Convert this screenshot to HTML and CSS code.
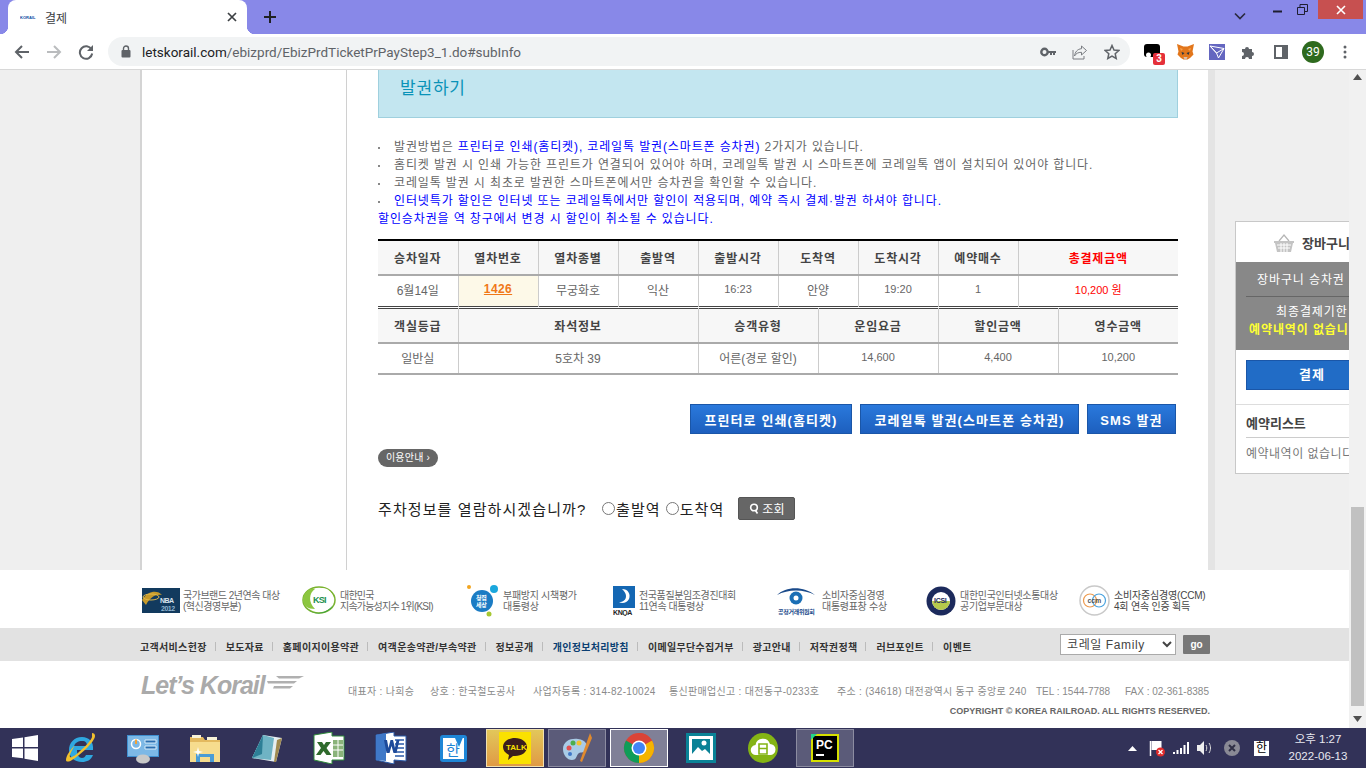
FILE: index.html

```html
<!DOCTYPE html>
<html lang="ko">
  <head>
    <meta charset="utf-8">
    <title>결제</title>
    <link rel="stylesheet" href="styles.css">
  </head>
  <body>
    <div class="tabstrip">
      <div class="tab">
        <span class="tab-favicon">KORAIL</span>
        <span class="tab-title">결제</span>
        <svg class="tab-close" width="10" height="10" viewBox="0 0 10 10"><path d="M1 1l8 8M9 1l-8 8" stroke="#3c4043" stroke-width="1.7"/></svg>
      </div>
      <svg class="tab-new" width="14" height="14" viewBox="0 0 14 14"><path d="M7 1v12M1 7h12" stroke="#202124" stroke-width="2"/></svg>
      <div class="win-buttons">
        <svg class="win-chevron" width="12" height="8" viewBox="0 0 12 8"><path d="M1 1.5l5 5 5-5" fill="none" stroke="#2b2b40" stroke-width="1.7"/></svg>
        <svg class="win-min" width="9" height="3" viewBox="0 0 9 3"><path d="M0 1.5h9" stroke="#1e1e30" stroke-width="2"/></svg>
        <svg class="win-restore" width="11" height="11" viewBox="0 0 11 11"><path d="M.5 3.5h7v7h-7zM3 3.5V.5h7.500v7H7.500" fill="none" stroke="#1e1e30"/></svg>
        <div class="win-close"><svg width="10" height="10" viewBox="0 0 10 10"><path d="M1 1l8 8M9 1l-8 8" stroke="#fff" stroke-width="1.600"/></svg></div>
      </div>
    </div>

    <div class="toolbar">
      <svg class="nav-icon" width="16" height="16" viewBox="0 0 16 16"><path d="M15 8H2M8 2L2 8l6 6" fill="none" stroke="#5f6368" stroke-width="2"/></svg>
      <svg class="nav-icon" width="16" height="16" viewBox="0 0 16 16"><path d="M1 8h13M8 2l6 6-6 6" fill="none" stroke="#babcbe" stroke-width="2"/></svg>
      <svg class="nav-icon" width="16" height="16" viewBox="0 0 16 16"><path d="M13.500 5.500A6.200 6.200 0 1 0 14.200 9.500" fill="none" stroke="#5f6368" stroke-width="2"/><path d="M15 1v6H9z" fill="#5f6368"/></svg>
      <div class="omnibox">
        <svg width="10" height="13" viewBox="0 0 10 13"><path d="M2.500 5V3.500a2.500 2.500 0 0 1 5 0V5" fill="none" stroke="#5f6368" stroke-width="1.400"/><rect x="0.500" y="5" width="9" height="7.500" rx="1" fill="#5f6368"/></svg>
        <span class="url"><b>letskorail.com</b>/ebizprd/EbizPrdTicketPrPayStep3_1.do#subInfo</span>
        <svg class="omni-icon" width="16" height="10" viewBox="0 0 16 10"><circle cx="4.500" cy="5" r="3.200" fill="none" stroke="#5f6368" stroke-width="2.400"/><path d="M8 4h8v2h-1v2h-2V6h-1v2h-2V6H8z" fill="#5f6368"/></svg>
        <svg class="omni-icon" width="16" height="16" viewBox="0 0 16 16"><path d="M9.500 2l5 4.500-5 4.500V8.300C6 8.300 4 9.500 2.500 12 3 8 5.500 5 9.500 4.700z" fill="none" stroke="#7a7d82"/><path d="M1 6v9h11v-3" fill="none" stroke="#7a7d82"/></svg>
        <svg class="omni-icon" width="16" height="16" viewBox="0 0 16 16"><path d="M8 1.500l2 4.500 4.800.5-3.600 3.200 1 4.800L8 12l-4.200 2.500 1-4.800L1.200 6.500 6 6z" fill="none" stroke="#5f6368" stroke-width="1.500"/></svg>
      </div>
      <div class="extensions">
        <div class="ext ext-black">
          <svg width="16" height="16" viewBox="0 0 16 16"><path d="M3 0h10a3 3 0 0 1 3 3v10H3a3 3 0 0 1-3-3V3a3 3 0 0 1 3-3z" fill="#000"/><circle cx="4.500" cy="11" r="2.500" fill="#fff"/></svg>
          <span class="ext-badge">3</span>
        </div>
        <svg class="ext" width="17" height="16" viewBox="0 0 17 16"><path d="M0 0l6.500 2.500h4L17 0l-1.500 7.500 1 3-3.500 3.500-2.500 1.500H6.500L4 14 .5 10.500l1-3z" fill="#e2761b"/><path d="M4.500 8l3 1-2 2zM12.500 8l-3 1 2 2z" fill="#233447"/><path d="M6.500 13h4l-1 2.500h-2z" fill="#d7c1b3"/><path d="M3 4l3 1-2 2zM14 4l-3 1 2 2z" fill="#f6a04d"/></svg>
        <svg class="ext" width="16" height="16" viewBox="0 0 16 16"><rect width="16" height="16" fill="#6466c0"/><path d="M1 2l14 2.500L9.500 14 7.500 9zM7.500 9L15 4.500M1 2l6.500 7" fill="none" stroke="#fff"/></svg>
        <svg class="ext" width="16" height="16" viewBox="0 0 16 16"><path d="M2 5h3a2 2 0 0 1 4 0h3v3a2 2 0 0 1 0 4v3H9a2 2 0 0 0-4 0H2v-3a2 2 0 0 0 0-4z" fill="#5f6368"/></svg>
        <svg class="ext" width="14" height="14" viewBox="0 0 14 14"><rect x="1" y="1" width="12" height="12" fill="none" stroke="#5f6368" stroke-width="2"/><rect x="8" y="1" width="5" height="12" fill="#5f6368"/></svg>
        <span class="avatar">39</span>
        <svg class="ext" width="4" height="14" viewBox="0 0 4 14"><circle cx="2" cy="2" r="1.500" fill="#5f6368"/><circle cx="2" cy="7" r="1.500" fill="#5f6368"/><circle cx="2" cy="12" r="1.500" fill="#5f6368"/></svg>
      </div>
    </div>

    <div class="viewport">
      <div class="page">
        <div class="wrap">
          <div class="side"></div>
          <div class="content">
            <h2 class="sec-title">발권하기</h2>
            <ul class="notice">
              <li>발권방법은 <em>프린터로 인쇄(홈티켓), 코레일톡 발권(스마트폰 승차권)</em> 2가지가 있습니다.</li>
              <li>홈티켓 발권 시 인쇄 가능한 프린트가 연결되어 있어야 하며, 코레일톡 발권 시 스마트폰에 코레일톡 앱이 설치되어 있어야 합니다.</li>
              <li>코레일톡 발권 시 최초로 발권한 스마트폰에서만 승차권을 확인할 수 있습니다.</li>
              <li><em>인터넷특가 할인은 인터넷 또는 코레일톡에서만 할인이 적용되며, 예약 즉시 결제·발권 하셔야 합니다.</em></li>
            </ul>
            <p class="notice-last">할인승차권을 역 창구에서 변경 시 할인이 취소될 수 있습니다.</p>

            <table class="tbl tbl-first">
              <tr>
                <th>승차일자</th><th>열차번호</th><th>열차종별</th><th>출발역</th><th>출발시각</th><th>도착역</th><th>도착시각</th><th>예약매수</th><th class="wide red">총결제금액</th>
              </tr>
              <tr>
                <td>6월14일</td><td class="train"><a href="#">1426</a></td><td>무궁화호</td><td>익산</td><td class="num">16:23</td><td>안양</td><td class="num">19:20</td><td class="num">1</td><td class="wide red num">10,200 원</td>
              </tr>
            </table>
            <table class="tbl tbl-second">
              <tr>
                <th class="c-grade">객실등급</th><th class="c-seat">좌석정보</th><th>승객유형</th><th>운임요금</th><th>할인금액</th><th>영수금액</th>
              </tr>
              <tr>
                <td>일반실</td><td>5호차 39</td><td>어른(경로 할인)</td><td class="num">14,600</td><td class="num">4,400</td><td class="num">10,200</td>
              </tr>
            </table>

            <div class="btn-row">
              <button class="btn-blue b1">프린터로 인쇄(홈티켓)</button>
              <button class="btn-blue b2">코레일톡 발권(스마트폰 승차권)</button>
              <button class="btn-blue b3">SMS 발권</button>
            </div>
            <div class="guide-row"><span class="pill">이용안내 ›</span></div>
            <div class="parking">
              <span class="parking-q">주차정보를 열람하시겠습니까?</span>
              <label class="parking-opt"><span class="radio"></span>출발역</label>
              <label class="parking-opt"><span class="radio"></span>도착역</label>
              <button class="btn-search">
                <svg width="10" height="11" viewBox="0 0 10 11"><circle cx="5" cy="4.500" r="3.300" fill="none" stroke="#fff" stroke-width="1.600"/><path d="M6.500 7.500l2 3" stroke="#fff" stroke-width="1.600"/></svg>
                조회
              </button>
            </div>
          </div>
        </div>

        <div class="footer">
          <div class="awards">
            <div class="award a1">
              <svg width="38" height="25" viewBox="0 0 38 25"><rect width="38" height="25" fill="#123a5e"/><path d="M0 12C6 2 16 2 20 7 14 6 8 9 4 17z" fill="#c79a2a"/><ellipse cx="9" cy="9" rx="8" ry="3" fill="none" stroke="#e0b84a"/><text x="18" y="15" class="logo-txt" fill="#d9e4ee">NBA</text><text x="19" y="23" class="logo-txt" fill="#8fb3cf">2012</text></svg>
              <span>국가브랜드 2년연속 대상<br>(혁신경영부분)</span>
            </div>
            <div class="award a2">
              <svg width="34" height="30" viewBox="0 0 34 30"><ellipse cx="17" cy="14" rx="16" ry="13" fill="none" stroke="#7ab32e" stroke-width="1.500"/><circle cx="20" cy="13" r="11" fill="#fff"/><path d="M1 14c0-7 6-12 12-11-6 4-7 13 0 20C6 23 1 20 1 14z" fill="#8cc63f"/><path d="M6 24c8 5 18 4 25-5-4 9-17 11-25 5z" fill="#2e9e44"/><text x="11" y="17" class="logo-ksi" fill="#1c8f4e">KSI</text></svg>
              <span>대한민국<br>지속가능성지수 1위(KSI)</span>
            </div>
            <div class="award a3">
              <svg width="32" height="33" viewBox="0 0 32 33"><circle cx="15" cy="17" r="11" fill="#1b7cc4"/><circle cx="2" cy="3" r="2" fill="#f2a51f"/><circle cx="27" cy="5" r="4" fill="#1aa7dd"/><circle cx="22" cy="30" r="2.500" fill="#a6c832"/><text x="9" y="16" class="logo-mini" fill="#fff">청렴</text><text x="9" y="23" class="logo-mini" fill="#fff">세상</text></svg>
              <span>부패방지 시책평가<br>대통령상</span>
            </div>
            <div class="award a4">
              <svg width="22" height="30" viewBox="0 0 22 30"><rect width="22" height="22" fill="#1467b3"/><path d="M9 3c6 0 9 5 7 10-2 4-7 5-10 3 4 0 7-2 7-6 0-3-2-5-4-7z" fill="#fff"/><text x="0" y="29" class="logo-txt" fill="#222">KNQA</text></svg>
              <span>전국품질분임조경진대회<br>11연속 대통령상</span>
            </div>
            <div class="award a5">
              <svg width="40" height="30" viewBox="0 0 40 30"><path d="M1 9C10 0 28 0 39 9 28 3 12 3 1 9z" fill="#1a4a8a"/><circle cx="20" cy="12" r="6.500" fill="#1a6fb5"/><circle cx="20" cy="12" r="2.500" fill="#fff"/><text x="2" y="28" class="logo-mini" fill="#1a4a8a">공정거래위원회</text></svg>
              <span>소비자중심경영<br>대통령표창 수상</span>
            </div>
            <div class="award a6">
              <svg width="30" height="30" viewBox="0 0 30 30"><circle cx="15" cy="15" r="14.500" fill="#1c2a5c"/><circle cx="15" cy="15" r="9" fill="#fff"/><path d="M6 15a9 9 0 0 0 18 0z" fill="#b5c94c"/><text x="8" y="17" class="logo-txt" fill="#1c2a5c">ICSI</text></svg>
              <span>대한민국인터넷소통대상<br>공기업부문대상</span>
            </div>
            <div class="award a7">
              <svg width="31" height="31" viewBox="0 0 31 31"><circle cx="15.500" cy="15.500" r="14.500" fill="#fff" stroke="#c9c9c9" stroke-width="1.500"/><circle cx="11" cy="15.500" r="6.500" fill="none" stroke="#ee9a4d" stroke-width="1.200"/><circle cx="20" cy="15.500" r="6.500" fill="none" stroke="#4aa3df" stroke-width="1.200"/><text x="8.500" y="18" class="logo-txt" fill="#555">ccm</text></svg>
              <span class="dark">소비자중심경영(CCM)<br>4회 연속 인증 획득</span>
            </div>
          </div>

          <div class="foot-nav">
            <ul class="foot-links">
              <li>고객서비스헌장</li>
              <li>보도자료</li>
              <li>홈페이지이용약관</li>
              <li>여객운송약관/부속약관</li>
              <li>정보공개</li>
              <li class="navy">개인정보처리방침</li>
              <li>이메일무단수집거부</li>
              <li>광고안내</li>
              <li>저작권정책</li>
              <li>러브포인트</li>
              <li>이벤트</li>
            </ul>
            <div class="family">
              <select class="family-select"><option>코레일 Family</option></select>
              <button class="btn-go">go</button>
            </div>
          </div>

          <div class="foot-info">
            <div class="foot-logo">
              <span class="logo-word">Let’s Korail</span>
              <svg width="37" height="13" viewBox="0 0 37 13"><path d="M9 0h28l-5 2.500H12zM0 5h30l-3 2.500H1zM7 10h19l-3 2.500H6z" fill="#b0b0b0"/></svg>
            </div>
            <div class="foot-text">
              <div class="foot-addr">
                <span>대표자 : 나희승</span>
                <span>상호 : 한국철도공사</span>
                <span>사업자등록 : 314-82-10024</span>
                <span>통신판매업신고 : 대전동구-0233호</span>
                <span>주소 : (34618) 대전광역시 동구 중앙로 240</span>
                <span class="latin">TEL : 1544-7788</span>
                <span class="latin">FAX : 02-361-8385</span>
              </div>
              <div class="copyright">COPYRIGHT © KOREA RAILROAD. ALL RIGHTS RESERVED.</div>
            </div>
          </div>
        </div>

        <div class="cart">
          <div class="cart-title">
            <svg width="20" height="18" viewBox="0 0 20 18"><path d="M5 7l5-6 5 6" fill="none" stroke="#b5b5b5" stroke-width="1.200"/><path d="M0 7h20v2h-1l-2 9H3L1 9H0z" fill="#c4c4c4"/><path d="M3 11h14M4 14h12M7 9v9M10 9v9M13 9v9" stroke="#fff"/></svg>
            <b>장바구니</b>
          </div>
          <div class="cart-grey">
            <div class="cart-grey-top">장바구니 승차권</div>
            <div class="cart-grey-bot">
              <span class="cart-deadline">최종결제기한</span>
              <b class="cart-none">예약내역이 없습니다</b>
            </div>
          </div>
          <div class="cart-pay"><button class="btn-pay">결제</button></div>
          <div class="cart-list">
            <h4>예약리스트</h4>
            <p>예약내역이 없습니다</p>
          </div>
        </div>
      </div>

      <div class="scrollbar">
        <svg width="9" height="6" viewBox="0 0 9 6"><path d="M4.500 0L9 6H0z" fill="#505050"/></svg>
        <div class="scroll-track"><div class="scroll-thumb"></div></div>
        <svg width="9" height="6" viewBox="0 0 9 6"><path d="M0 0h9L4.500 6z" fill="#505050"/></svg>
      </div>
    </div>

    <div class="taskbar">
      <div class="start">
        <svg width="26" height="26" viewBox="0 0 26 26"><path d="M0 4l11-1.600V12H0zM12.500 2.200L26 0v12H12.500zM0 13.500h11v9.800L0 22zM12.500 13.500H26V26l-13.500-2.200z" fill="#fff"/></svg>
      </div>
      <div class="task">
        <svg width="32" height="32" viewBox="0 0 32 32"><path d="M8 18h20c1-8-4-13-11-13C9 5 4 11 4 18c0 7 5 12 13 12 5 0 9-2 11-7h-7c-1 2-2 3-4 3-3 0-5-3-5-8zm1-4c1-3 4-5 8-5s5 2 5 5z" fill="#2fa8e0"/><path d="M27 1c3 0 4 3 2 6-3 6-14 16-22 21-3 2-6 2-6 0 0-4 4-10 9-15-3 5-6 10-5 12 1 1 5-1 10-6 7-6 13-13 12-15z" fill="#f2c12e"/></svg>
      </div>
      <div class="task">
        <svg width="32" height="32" viewBox="0 0 32 32"><rect y="3" width="32" height="22" fill="#3f8fd0"/><rect x="1" y="4" width="30" height="20" fill="#7db8e6"/><circle cx="9" cy="12" r="4.500" fill="none" stroke="#fff" stroke-width="1.500"/><path d="M9 7.500v4.500" stroke="#f2a33a" stroke-width="2"/><path d="M18 8h11v3H18zM18 14h11v3H18z" fill="#2a6eb0" stroke="#d8ecfa"/><ellipse cx="16" cy="27" rx="7" ry="4.500" fill="#c9c9c9"/></svg>
      </div>
      <div class="task">
        <svg width="32" height="32" viewBox="0 0 32 32"><path d="M1 5h13l2 3h15v22H1z" fill="#e3b95f"/><path d="M3 3h9v3H3zM18 5h10v3H18z" fill="#f8f2d8"/><rect x="1" y="10" width="30" height="20" fill="#f6dc8e"/><path d="M7 30V22h18v8h-4v-5H11v5z" fill="#4a9cd6"/><path d="M8 19l1-4 1 4 4 1-4 1-1 4-1-4-4-1z" fill="#fff"/></svg>
      </div>
      <div class="task">
        <svg width="32" height="32" viewBox="0 0 32 32"><path d="M12 3L1 26l24 4 6-24z" fill="#e6eef0"/><path d="M12 3L1 26l19 2 3-22z" fill="#6fb3c4"/><path d="M12 3L1 26l10-4z" fill="#2d7f96"/><path d="M26 8l5-2-6 24h-2z" fill="#a08a50"/></svg>
      </div>
      <div class="task">
        <svg width="32" height="32" viewBox="0 0 32 32"><path d="M1 3l18-3v4h12v24H19v4L1 28z" fill="#fff" stroke="#2f8a3a"/><path d="M20 8h10v17H20z" fill="#8ab37a"/><path d="M20 13h10M20 18h10M25 8v17" stroke="#fff"/><path d="M4 10h5l2 3 2-3h5l-4.500 6 5 7h-5l-3-4-3 4H3l5-7z" fill="#2f6a2c"/></svg>
      </div>
      <div class="task">
        <svg width="32" height="32" viewBox="0 0 32 32"><path d="M1 3l18-3v4h12v25l-12-1v4L1 28z" fill="#fff" stroke="#2a5aa8"/><path d="M1 3l10-2v28L1 28z" fill="#3f78c8"/><path d="M20 8h9M20 12h9M20 16h9M20 20h9M20 24h9" stroke="#2a5aa8" stroke-width="1.500"/><path d="M9 8h3l1.500 8 2-8h2.500l2 8 1.500-8h3l-3 13h-3l-2-7-2 7h-3z" fill="#1e4a9a"/></svg>
      </div>
      <div class="task">
        <svg width="32" height="32" viewBox="0 0 32 32"><rect x="3" y="3" width="27" height="27" rx="3" fill="#1f86d6"/><rect x="6" y="6" width="21" height="21" fill="#fff"/><text x="9" y="24" class="logo-han">한</text><path d="M18 6l9-3-5 12z" fill="#1f86d6"/></svg>
      </div>
      <div class="task task-box task-talk">
        <svg width="32" height="32" viewBox="0 0 32 32"><rect width="32" height="32" fill="#fae100"/><path d="M16 6c7 0 12 4 12 9s-5 9-12 9h-2l-5 4 1-5c-4-2-6-5-6-8 0-5 5-9 12-9z" fill="#3b1e1e"/><text x="7" y="18" class="logo-talk">TALK</text></svg>
      </div>
      <div class="task task-box">
        <svg width="32" height="32" viewBox="0 0 32 32"><path d="M2 17C2 9 10 6 17 7c8 1 11 7 8 11-3 4-6 1-8 4-2 3-2 6-6 6-5 0-9-5-9-11z" fill="#a9cbe6"/><circle cx="8" cy="16" r="2.500" fill="#e34f4f"/><circle cx="12" cy="11" r="2.500" fill="#4cae4c"/><circle cx="18" cy="11" r="2.500" fill="#f2c12e"/><circle cx="9" cy="22" r="2" fill="#3f78c8"/><path d="M29 1l2 5-10 24-2-1z" fill="#e08a2e"/></svg>
      </div>
      <div class="task task-box task-on">
        <svg width="32" height="32" viewBox="0 0 32 32"><circle cx="16" cy="16" r="15" fill="#db4437"/><path d="M16 16L29 8.500A15 15 0 0 1 16 31z" fill="#f4b400"/><path d="M16 16v15A15 15 0 0 1 3 8.500z" fill="#0f9d58"/><path d="M16 1a15 15 0 0 1 13 7.500H16z" fill="#db4437"/><circle cx="16" cy="16" r="7.500" fill="#fff"/><circle cx="16" cy="16" r="6" fill="#4285f4"/></svg>
      </div>
      <div class="task">
        <svg width="30" height="30" viewBox="0 0 30 30"><rect width="30" height="30" fill="#0a8296"/><rect x="3" y="3" width="24" height="24" fill="#fff"/><rect x="6" y="6" width="18" height="15" fill="#0a8296"/><path d="M6 21l6-7 4 4 3-2 5 5z" fill="#fff"/><circle cx="18" cy="10" r="2.500" fill="#fff"/></svg>
      </div>
      <div class="task">
        <svg width="30" height="30" viewBox="0 0 30 30"><circle cx="15" cy="15" r="15" fill="#84b414"/><path d="M8 22a5 5 0 0 1-.500-10A7.500 7.500 0 0 1 22 11a5.500 5.500 0 0 1 0 11z" fill="#fff"/><path d="M11 11h8v10h-8zM11 15.500h8" fill="none" stroke="#84b414" stroke-width="1.600"/></svg>
      </div>
      <div class="task task-box">
        <svg width="28" height="28" viewBox="0 0 28 28"><rect width="28" height="28" fill="#d6e000"/><rect x="2" y="2" width="24" height="24" fill="#000"/><path d="M0 0h6L0 6z" fill="#21d789"/><text x="5" y="15" class="logo-pc">PC</text><path d="M5 21h8" stroke="#fff" stroke-width="2"/></svg>
      </div>
      <div class="tray">
        <svg class="tray-caret" width="9" height="5" viewBox="0 0 9 5"><path d="M4.500 0L9 5H0z" fill="#fff"/></svg>
        <svg class="tray-flag" width="17" height="17" viewBox="0 0 16 17"><path d="M1 1v15" stroke="#fff" stroke-width="1.500"/><path d="M2 1h10v9H2z" fill="#fff"/><circle cx="11" cy="12" r="4.500" fill="#e02b2b"/><path d="M9 10l4 4M13 10l-4 4" stroke="#fff" stroke-width="1.300"/></svg>
        <svg class="tray-signal" width="16" height="12" viewBox="0 0 16 12"><path d="M0 10h2v2H0zM3.500 8h2v4h-2zM7 6h2v6H7zM10.500 3h2v9h-2zM14 0h2v12h-2z" fill="#fff"/></svg>
        <svg class="tray-sound" width="15" height="14" viewBox="0 0 15 14"><path d="M0 4h3l4-4v14l-4-4H0z" fill="#eee"/><path d="M9 4c1 2 1 4 0 6M12 2c2 3 2 7 0 10" fill="none" stroke="#ddd"/></svg>
        <svg class="tray-x" width="16" height="16" viewBox="0 0 16 16"><circle cx="8" cy="8" r="8" fill="#8a8a95"/><path d="M5 5l6 6M11 5l-6 6" stroke="#2f2f45" stroke-width="2"/></svg>
        <span class="tray-han">한</span>
        <div class="clock">오후 1:27<br>2022-06-13</div>
      </div>
    </div>
  </body>
</html>
```

FILE: styles.css

```css
* {
  box-sizing: border-box;
}
html,
body {
  margin: 0;
  height: 768px;
  overflow: hidden;
}
body {
  width: 1366px;
  display: flex;
  flex-direction: column;
  font-family: "Liberation Sans", "Noto Sans CJK KR", sans-serif;
  font-size: 12px;
  color: #666;
  background: #fff;
}
ul {
  list-style: none;
  margin: 0;
  padding: 0;
}
button {
  font-family: inherit;
  border: none;
  cursor: pointer;
}

/* browser chrome */
.tabstrip {
  height: 34px;
  flex: none;
  display: flex;
  align-items: flex-start;
  background: #8888e8;
  padding-left: 8px;
}
.tab {
  width: 239px;
  height: 34px;
  display: flex;
  align-items: center;
  padding: 0 10px 0 12px;
  background: #fff;
  border-radius: 8px 8px 0 0;
  position: relative;
}
.tab::before,
.tab::after {
  content: "";
  position: absolute;
  bottom: 0;
  width: 8px;
  height: 8px;
}
.tab::before {
  left: -8px;
  background: radial-gradient(circle at 0 0, transparent 8px, #fff 8.5px);
}
.tab::after {
  right: -8px;
  background: radial-gradient(circle at 100% 0, transparent 8px, #fff 8.5px);
}
.tab-favicon {
  width: 16px;
  font-size: 4px;
  font-weight: bold;
  color: #0b4ea2;
  overflow: hidden;
}
.tab-title {
  flex: 1;
  margin-left: 9px;
  font-family: "Noto Sans CJK KR", sans-serif;
  font-size: 12px;
  color: #3c4043;
}
.tab-new {
  margin: 10px 0 0 16px;
}
.win-buttons {
  margin-left: auto;
  display: flex;
  align-items: flex-start;
}
.win-chevron {
  margin: 12px 27px 0 0;
}
.win-min {
  margin: 10px 15px 0 0;
}
.win-restore {
  margin: 4px 10px 0 0;
}
.win-close {
  width: 45px;
  height: 19px;
  margin-right: 3px;
  background: #c75050;
  display: flex;
  align-items: center;
  justify-content: center;
}
.toolbar {
  height: 36px;
  flex: none;
  display: flex;
  align-items: center;
  background: #fff;
  padding: 0 0 0 14px;
  border-bottom: 1px solid #d8d8d8;
}
.nav-icon {
  margin-right: 16px;
}
.omnibox {
  width: 1022px;
  height: 29px;
  margin-left: -2px;
  display: flex;
  align-items: center;
  padding: 0 10px 0 13px;
  background: #f1f3f4;
  border-radius: 15px;
  color: #5f6368;
  font-family: "Roboto", sans-serif;
  font-size: 13.5px;
}
.url {
  flex: 1;
  margin-left: 11px;
}
.url b {
  font-weight: normal;
  color: #202124;
}
.omni-icon {
  margin-left: 16px;
}
.extensions {
  display: flex;
  align-items: center;
  margin-left: 14px;
}
.ext {
  flex: none;
}
.ext-black {
  position: relative;
  width: 16px;
  height: 16px;
}
.ext-badge {
  position: absolute;
  left: 9px;
  top: 9px;
  width: 12px;
  height: 12px;
  background: #e5303a;
  border-radius: 2px;
  color: #fff;
  font-size: 10px;
  font-weight: bold;
  line-height: 12px;
  text-align: center;
}
.extensions svg:nth-child(2) {
  margin-left: 17px;
}
.extensions svg:nth-child(3) {
  margin-left: 15px;
}
.extensions svg:nth-child(4) {
  margin-left: 15px;
}
.extensions svg:nth-child(5) {
  margin-left: 18px;
}
.avatar {
  width: 22px;
  height: 22px;
  margin-left: 14px;
  border-radius: 50%;
  background: #2e6a1e;
  color: #fff;
  font-size: 12px;
  line-height: 22px;
  text-align: center;
  font-family: "Roboto", sans-serif;
}
.extensions svg:last-child {
  margin-left: 19px;
}

/* page viewport */
.viewport {
  height: 658px;
  flex: none;
  display: flex;
  overflow: hidden;
}
.page {
  width: 1349px;
  height: 658px;
  position: relative;
  overflow: hidden;
  background: #efefef;
}
.wrap {
  width: 1075px;
  height: 500px;
  margin-left: 140px;
  display: flex;
  background: #fff;
  border-left: 2px solid #d4d4d4;
  border-right: 7px solid #e4e4e4;
}
.side {
  width: 205px;
  border-right: 1px solid #d0d0d0;
}
.content {
  width: 800px;
  margin-left: 31px;
}
.sec-title {
  height: 48px;
  margin: 0;
  padding: 7px 0 0 21px;
  background: #c3e6f0;
  border: 1px solid #9fd0de;
  border-top: none;
  font-size: 17px;
  font-weight: normal;
  line-height: 24px;
  letter-spacing: 0.8px;
  color: #0a93b8;
}
.notice {
  margin-top: 20px;
}
.notice li {
  height: 18px;
  line-height: 18px;
  padding-left: 16px;
  position: relative;
  letter-spacing: 0.87px;
}
.notice li::before {
  content: "";
  position: absolute;
  left: 0;
  top: 9px;
  width: 2px;
  height: 2px;
  background: #888;
}
.notice em,
.notice-last {
  font-style: normal;
  color: #0000ff;
}
.notice-last {
  margin: 0;
  height: 18px;
  line-height: 18px;
  letter-spacing: 0.87px;
}

/* ticket tables */
.tbl {
  width: 800px;
  border-collapse: collapse;
  table-layout: fixed;
  text-align: center;
}
.tbl-first {
  margin-top: 11px;
  border-top: 2px solid #000;
  border-bottom: 1px solid #444;
}
.tbl-second {
  margin-top: 1px;
  border-top: 1px solid #444;
  border-bottom: 2px solid #aaa;
}
.tbl th {
  height: 35px;
  background: #f7f7f7;
  border-left: 1px solid #ccc;
  border-bottom: 2px solid #aaa;
  font-weight: bold;
  letter-spacing: 0.8px;
  color: #444;
}
.tbl td {
  height: 31px;
  padding: 0 0 3px;
  border-left: 1px solid #ccc;
}
.tbl th:first-child,
.tbl td:first-child {
  border-left: none;
}
.tbl-first th,
.tbl-first td {
  width: 80px;
}
.tbl-first .wide {
  width: 160px;
}
.tbl-second th {
  width: 120px;
}
.tbl-second .c-grade {
  width: 80px;
}
.tbl-second .c-seat {
  width: 240px;
}
.tbl .num {
  font-size: 11px;
}
.tbl .red {
  color: #ff0000;
}
.tbl .train {
  background: #fdf9e8;
}
.train a {
  color: #f07818;
  font-weight: bold;
  letter-spacing: 0.4px;
}

/* buttons under the tables */
.btn-row {
  margin-top: 29px;
  padding-right: 2px;
  display: flex;
  justify-content: flex-end;
  gap: 8px;
}
.btn-blue {
  height: 30px;
  padding: 0;
  background: linear-gradient(#2a79dc, #1d5fbe);
  border: 1px solid #1a56a8;
  color: #fff;
  font-size: 13px;
  font-weight: bold;
  letter-spacing: 1.1px;
}
.b1 {
  width: 162px;
}
.b2 {
  width: 219px;
}
.b3 {
  width: 89px;
}
.guide-row {
  margin-top: 15px;
  display: flex;
}
.pill {
  width: 60px;
  height: 18px;
  background: #666;
  border-radius: 9px;
  color: #fff;
  font-size: 10px;
  line-height: 18px;
  letter-spacing: 0.2px;
  text-align: center;
}
.parking {
  margin-top: 30px;
  display: flex;
  align-items: center;
  height: 23px;
  color: #222;
  font-size: 15px;
  letter-spacing: 1.1px;
}
.parking-q {
  width: 224px;
}
.parking-opt {
  display: flex;
  align-items: center;
  margin-right: 5px;
}
.radio {
  width: 13px;
  height: 13px;
  margin-right: 1px;
  border: 1px solid #777;
  border-radius: 50%;
  background: #fff;
}
.btn-search {
  width: 57px;
  height: 23px;
  margin-left: 9px;
  padding: 0;
  background: #666;
  border: 1px solid #555;
  border-radius: 2px;
  color: #fff;
  font-size: 12px;
  letter-spacing: 0;
  display: flex;
  align-items: center;
  justify-content: center;
  gap: 3px;
}

/* footer */
.footer {
  background: #fff;
  height: 158px;
}
.awards {
  height: 58px;
  padding: 3px 0 0 142px;
  display: flex;
  align-items: center;
}
.award {
  display: flex;
  align-items: center;
  gap: 4px;
  font-size: 10px;
  line-height: 11px;
  letter-spacing: -0.3px;
  color: #666;
  white-space: nowrap;
}
.award .dark {
  color: #444;
}
.a1 {
  width: 160px;
  gap: 3px;
  letter-spacing: -0.5px;
}
.a2 {
  width: 165px;
  letter-spacing: -0.8px;
}
.a3 {
  width: 146px;
}
.a4 {
  width: 163px;
  letter-spacing: -0.4px;
}
.a5 {
  width: 150px;
  gap: 6px;
}
.a6 {
  width: 153px;
}
.a7 {
  width: 135px;
  letter-spacing: -0.2px;
}
.logo-txt {
  font-size: 7px;
  font-weight: bold;
}
.logo-ksi {
  font-size: 9px;
  font-weight: bold;
}
.logo-mini {
  font-size: 6px;
  font-weight: bold;
}
.logo-han {
  font-size: 15px;
  fill: #1f86d6;
}
.logo-talk {
  font-size: 8px;
  font-weight: bold;
  fill: #fae100;
}
.logo-pc {
  font-size: 12px;
  font-weight: bold;
  fill: #fff;
}
.foot-nav {
  height: 33px;
  padding: 0 139px 0 140px;
  display: flex;
  align-items: center;
  justify-content: space-between;
  background: #e2e2e2;
}
.foot-links {
  display: flex;
  padding-top: 3px;
  font-size: 10px;
  font-weight: bold;
  letter-spacing: 0.33px;
  color: #333;
}
.foot-links li {
  padding-right: 9px;
  margin-right: 10px;
  position: relative;
}
.foot-links li::after {
  content: "";
  position: absolute;
  right: 0;
  top: 3px;
  width: 1px;
  height: 9px;
  background: #bbb;
}
.foot-links li:last-child::after {
  display: none;
}
.foot-links .navy {
  color: #0b3f72;
}
.family {
  display: flex;
  align-items: center;
  gap: 7px;
}
.family-select {
  width: 116px;
  height: 21px;
  padding-left: 2px;
  border: 1px solid #aaa;
  background: #fff;
  color: #444;
  font-family: inherit;
  font-size: 12px;
  letter-spacing: 0.6px;
}
.btn-go {
  width: 27px;
  height: 19px;
  padding: 0;
  background: #777;
  color: #fff;
  font-size: 10px;
  font-weight: bold;
  border-radius: 1px;
}
.foot-info {
  display: flex;
  padding: 14px 139px 0 141px;
}
.foot-logo {
  width: 207px;
  display: flex;
  align-items: flex-start;
  gap: 2px;
}
.foot-logo svg {
  margin-top: 1px;
}
.logo-word {
  font-size: 25px;
  font-style: italic;
  font-weight: bold;
  line-height: 20px;
  color: #aaa;
  letter-spacing: -1px;
  white-space: nowrap;
}
.foot-text {
  flex: 1;
  padding-top: 8px;
}
.foot-addr {
  display: grid;
  grid-template-columns: 82px 103px 136px 168px 199px 89px auto;
  align-items: baseline;
  font-size: 10px;
  letter-spacing: 0.3px;
  color: #8a8a8a;
  white-space: nowrap;
}
.foot-addr .latin {
  letter-spacing: 0;
}
.copyright {
  margin-top: 8px;
  text-align: right;
  font-size: 9px;
  font-weight: bold;
  color: #666;
}

/* cart panel floats over the page */
.cart {
  position: absolute;
  left: 1235px;
  top: 151px;
  width: 160px;
  height: 253px;
  background: #fff;
  border: 1px solid #c8c8c8;
}
.cart-title {
  height: 40px;
  padding: 1px 0 0 38px;
  display: flex;
  align-items: center;
  gap: 8px;
  font-size: 13px;
  color: #444;
}
.cart-grey {
  height: 88px;
  background: #888;
  color: #fff;
  padding: 0 10px;
  white-space: nowrap;
  letter-spacing: 0.9px;
}
.cart-grey-top {
  height: 35px;
  padding: 2px 0 0 11px;
  line-height: 33px;
  border-bottom: 1px solid #666;
}
.cart-grey-bot {
  padding-top: 6px;
  line-height: 18px;
}
.cart-deadline {
  display: block;
  padding-left: 30px;
}
.cart-none {
  display: block;
  padding-left: 3px;
  color: #ffff33;
}
.cart-pay {
  height: 55px;
  padding: 10px 10px 0;
  border-bottom: 1px solid #ddd;
}
.btn-pay {
  display: block;
  width: 132px;
  height: 30px;
  padding: 0 0 4px;
  background: #216cc6;
  border: 1px solid #1a56a8;
  color: #fff;
  font-size: 13px;
  font-weight: bold;
  letter-spacing: 1px;
}
.cart-list {
  padding: 0 10px;
  white-space: nowrap;
}
.cart-list h4 {
  margin: 0;
  height: 33px;
  line-height: 37px;
  font-size: 13px;
  color: #444;
  border-bottom: 1px solid #ccc;
}
.cart-list p {
  margin: 0;
  line-height: 32px;
  letter-spacing: 0.5px;
  color: #777;
}

/* scrollbar */
.scrollbar {
  width: 17px;
  flex: none;
  display: flex;
  flex-direction: column;
  align-items: center;
  padding: 4px 0 6px;
  background: #f1f1f1;
}
.scroll-track {
  flex: 1;
  width: 100%;
  padding: 427px 2px 0;
}
.scroll-thumb {
  height: 199px;
  background: #c1c1c1;
}

/* windows taskbar */
.taskbar {
  height: 40px;
  flex: none;
  display: flex;
  align-items: center;
  background: #323258;
}
.start {
  width: 50px;
  display: flex;
  justify-content: center;
}
.task {
  width: 62px;
  height: 38px;
  display: flex;
  align-items: center;
  justify-content: center;
}
.task-box {
  margin: 0 2px;
  width: 58px;
  background: rgba(255, 255, 255, 0.2);
  border: 1px solid rgba(255, 255, 255, 0.3);
}
.task-talk {
  background: linear-gradient(#e2c75a, #e09a45);
  border-color: #f0e0b0;
}
.task-on {
  background: rgba(255, 255, 255, 0.38);
  border-color: #fff;
}
.tray {
  margin-left: auto;
  display: flex;
  align-items: center;
  padding-right: 14px;
  color: #e8e8f0;
}
.tray-caret {
  margin-right: 12px;
}
.tray-flag {
  margin-right: 7px;
}
.tray-signal {
  margin-right: 8px;
}
.tray-sound {
  margin-right: 12px;
}
.tray-x {
  margin-right: 14px;
}
.tray-han {
  width: 15px;
  height: 15px;
  background: #fff;
  color: #000;
  font-size: 12px;
  line-height: 15px;
  text-align: center;
  margin-right: 15px;
}
.clock {
  width: 68px;
  font-size: 11.5px;
  line-height: 17px;
  text-align: center;
}
```
